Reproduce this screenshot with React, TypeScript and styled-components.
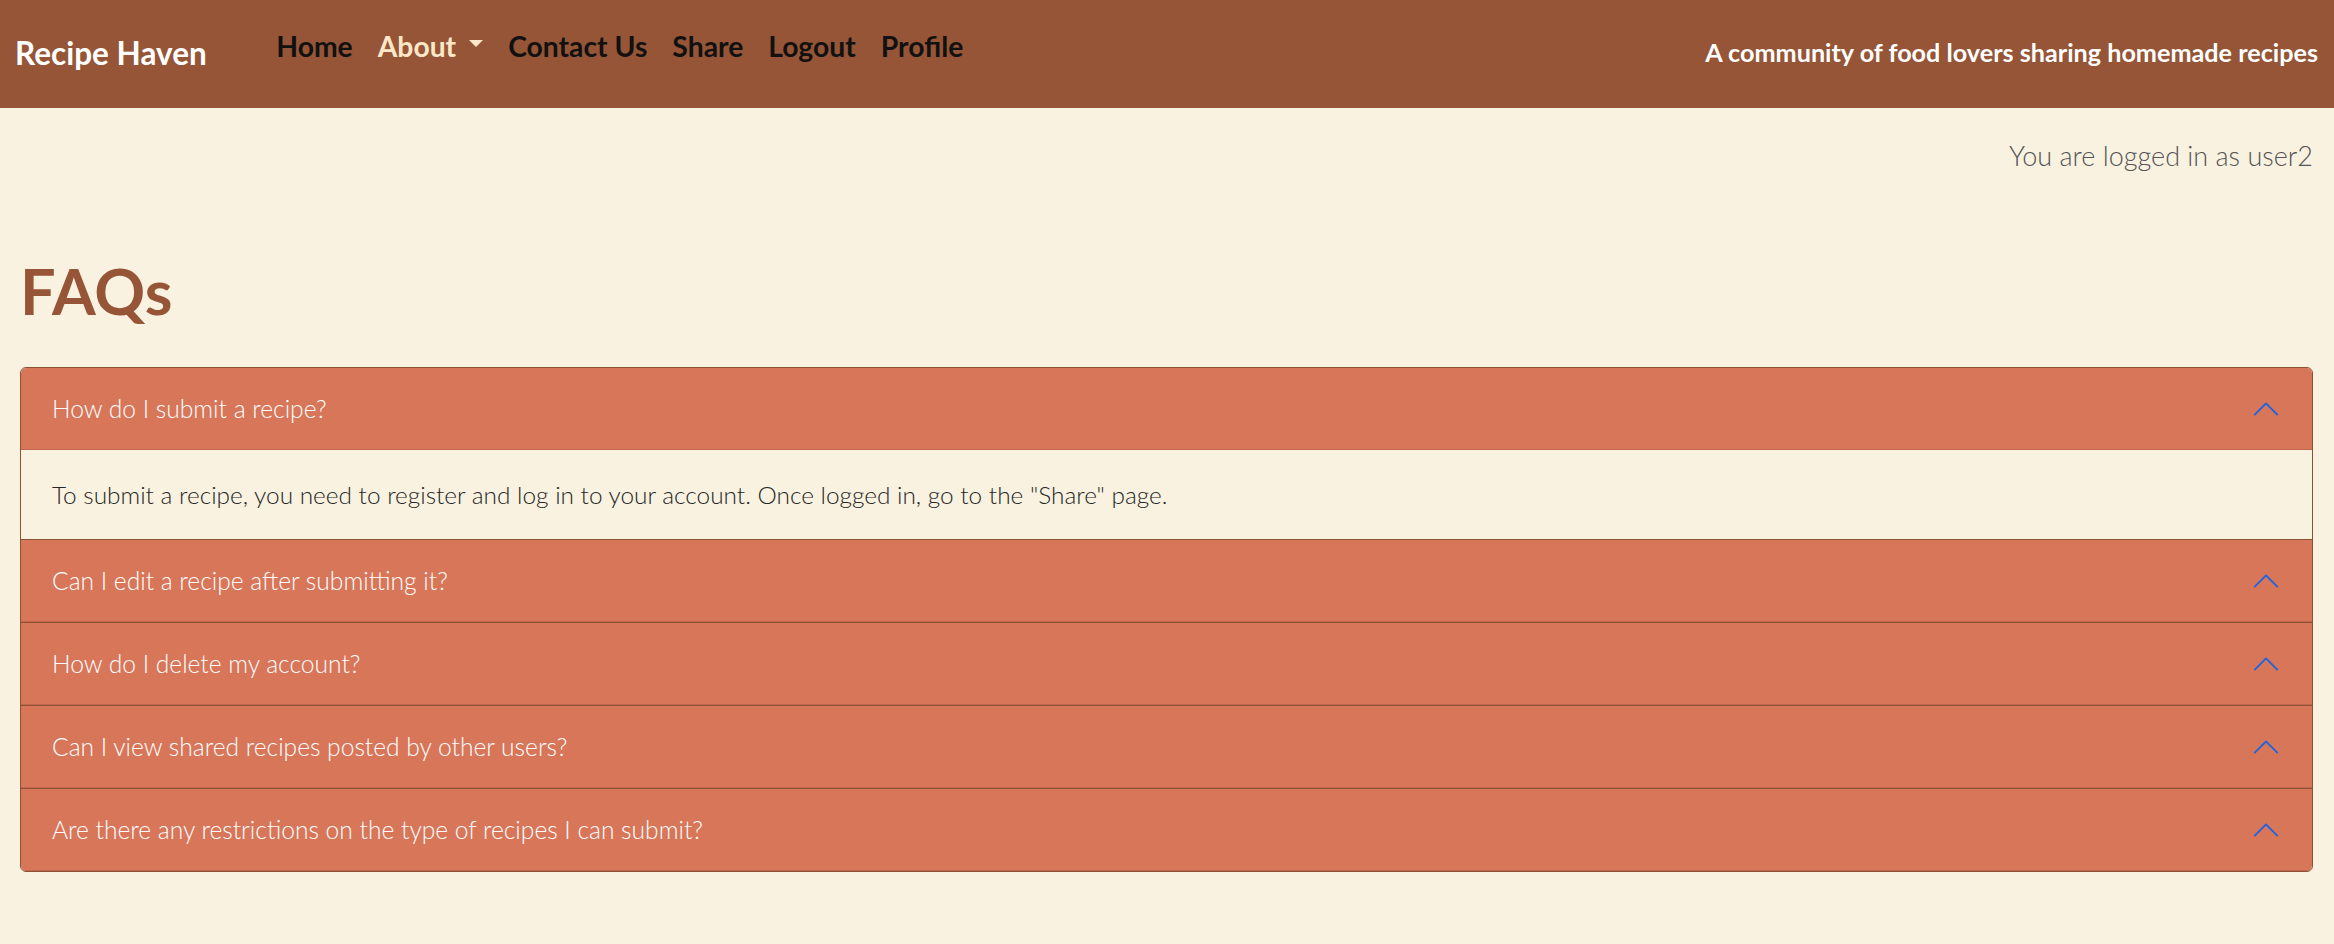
import React from "react";
import styled, { createGlobalStyle } from "styled-components";

const GlobalStyle = createGlobalStyle`
  html, body {
    margin: 0;
    padding: 0;
    background: #f9f2e0;
    font-family: Lato, "Open Sans", sans-serif;
  }
  * { box-sizing: border-box; }
`;

const Page = styled.div`
  min-height: 944px;
  background: #f9f2e0;
`;

const Navbar = styled.nav`
  height: 108px;
  background: #955536;
  display: flex;
  align-items: flex-start;
  padding: 0 16px 0 15px;
`;

const Brand = styled.a`
  font-size: 31.5px;
  line-height: 36px;
  font-weight: 700;
  color: #ffffff;
  text-decoration: none;
  margin-top: 35px;
`;

const NavList = styled.ul`
  list-style: none;
  display: flex;
  margin: 27px 0 0 57px;
  padding: 0;
`;

const NavLink = styled.a<{ $active?: boolean }>`
  display: inline-flex;
  align-items: center;
  padding: 0 12.5px;
  font-size: 28.3px;
  line-height: 39px;
  font-weight: 700;
  color: ${(p) => (p.$active ? "#fce7c8" : "#111111")};
  text-decoration: none;
  cursor: pointer;
`;

const Caret = styled.span`
  display: inline-block;
  margin-left: 13px;
  width: 0;
  height: 0;
  border-top: 7px solid #fce7c8;
  border-left: 7.5px solid transparent;
  border-right: 7.5px solid transparent;
  margin-top: -7px;
`;

const Tagline = styled.div`
  margin-left: auto;
  margin-top: 34px;
  font-size: 25.2px;
  line-height: 36px;
  font-weight: 700;
  color: #ffffff;
`;

const Main = styled.main`
  padding: 0 21px 0 20px;
`;

const LoggedIn = styled.p`
  margin: 28px 0 0;
  text-align: right;
  font-size: 27px;
  line-height: 40px;
  font-weight: 300;
  color: #555555;
`;

const Title = styled.h1`
  margin: 76px 0 38px;
  font-size: 63px;
  line-height: 77px;
  font-weight: 700;
  color: #955536;
`;

const Accordion = styled.div`
  border: 1px solid #8c5236;
  border-radius: 6px;
  overflow: hidden;
`;

const Item = styled.div`
  & + & {
    border-top: 1px solid #8c5236;
  }
`;

const Header = styled.button`
  width: 100%;
  height: 82px;
  display: flex;
  align-items: center;
  justify-content: space-between;
  padding: 0 31px 0 31px;
  background: #d87659;
  border: 0;
  box-shadow: inset 0 -1px 0 #c2654b;
  font-family: Lato, "Open Sans", sans-serif;
  font-size: 24.6px;
  line-height: 36px;
  font-weight: 300;
  color: #ffffff;
  text-align: left;
  cursor: pointer;
`;

const Chevron = styled.svg`
  width: 30px;
  height: 30px;
  flex-shrink: 0;
  transform: rotate(180deg);
`;

const Body = styled.div`
  padding: 27px 31px 26px;
  font-size: 24.4px;
  line-height: 36px;
  font-weight: 300;
  color: #262626;
  background: #f9f2e0;
`;

const faqs = [
  {
    q: "How do I submit a recipe?",
    a: 'To submit a recipe, you need to register and log in to your account. Once logged in, go to the "Share" page.',
  },
  { q: "Can I edit a recipe after submitting it?" },
  { q: "How do I delete my account?" },
  { q: "Can I view shared recipes posted by other users?" },
  { q: "Are there any restrictions on the type of recipes I can submit?" },
];

const ChevronIcon = () => (
  <Chevron viewBox="0 0 16 16" fill="#1f63e0">
    <path
      fillRule="evenodd"
      d="M1.646 4.646a.5.5 0 0 1 .708 0L8 10.293l5.646-5.647a.5.5 0 0 1 .708.708l-6 6a.5.5 0 0 1-.708 0l-6-6a.5.5 0 0 1 0-.708z"
    />
  </Chevron>
);

export default function App() {
  return (
    <Page>
      <GlobalStyle />
      <Navbar>
        <Brand>Recipe Haven</Brand>
        <NavList>
          <li><NavLink>Home</NavLink></li>
          <li>
            <NavLink $active>
              About
              <Caret />
            </NavLink>
          </li>
          <li><NavLink>Contact Us</NavLink></li>
          <li><NavLink>Share</NavLink></li>
          <li><NavLink>Logout</NavLink></li>
          <li><NavLink>Profile</NavLink></li>
        </NavList>
        <Tagline>A community of food lovers sharing homemade recipes</Tagline>
      </Navbar>
      <Main>
        <LoggedIn>You are logged in as user2</LoggedIn>
        <Title>FAQs</Title>
        <Accordion>
          {faqs.map((f) => (
            <Item key={f.q}>
              <Header>
                <span>{f.q}</span>
                <ChevronIcon />
              </Header>
              {f.a && <Body>{f.a}</Body>}
            </Item>
          ))}
        </Accordion>
      </Main>
    </Page>
  );
}
